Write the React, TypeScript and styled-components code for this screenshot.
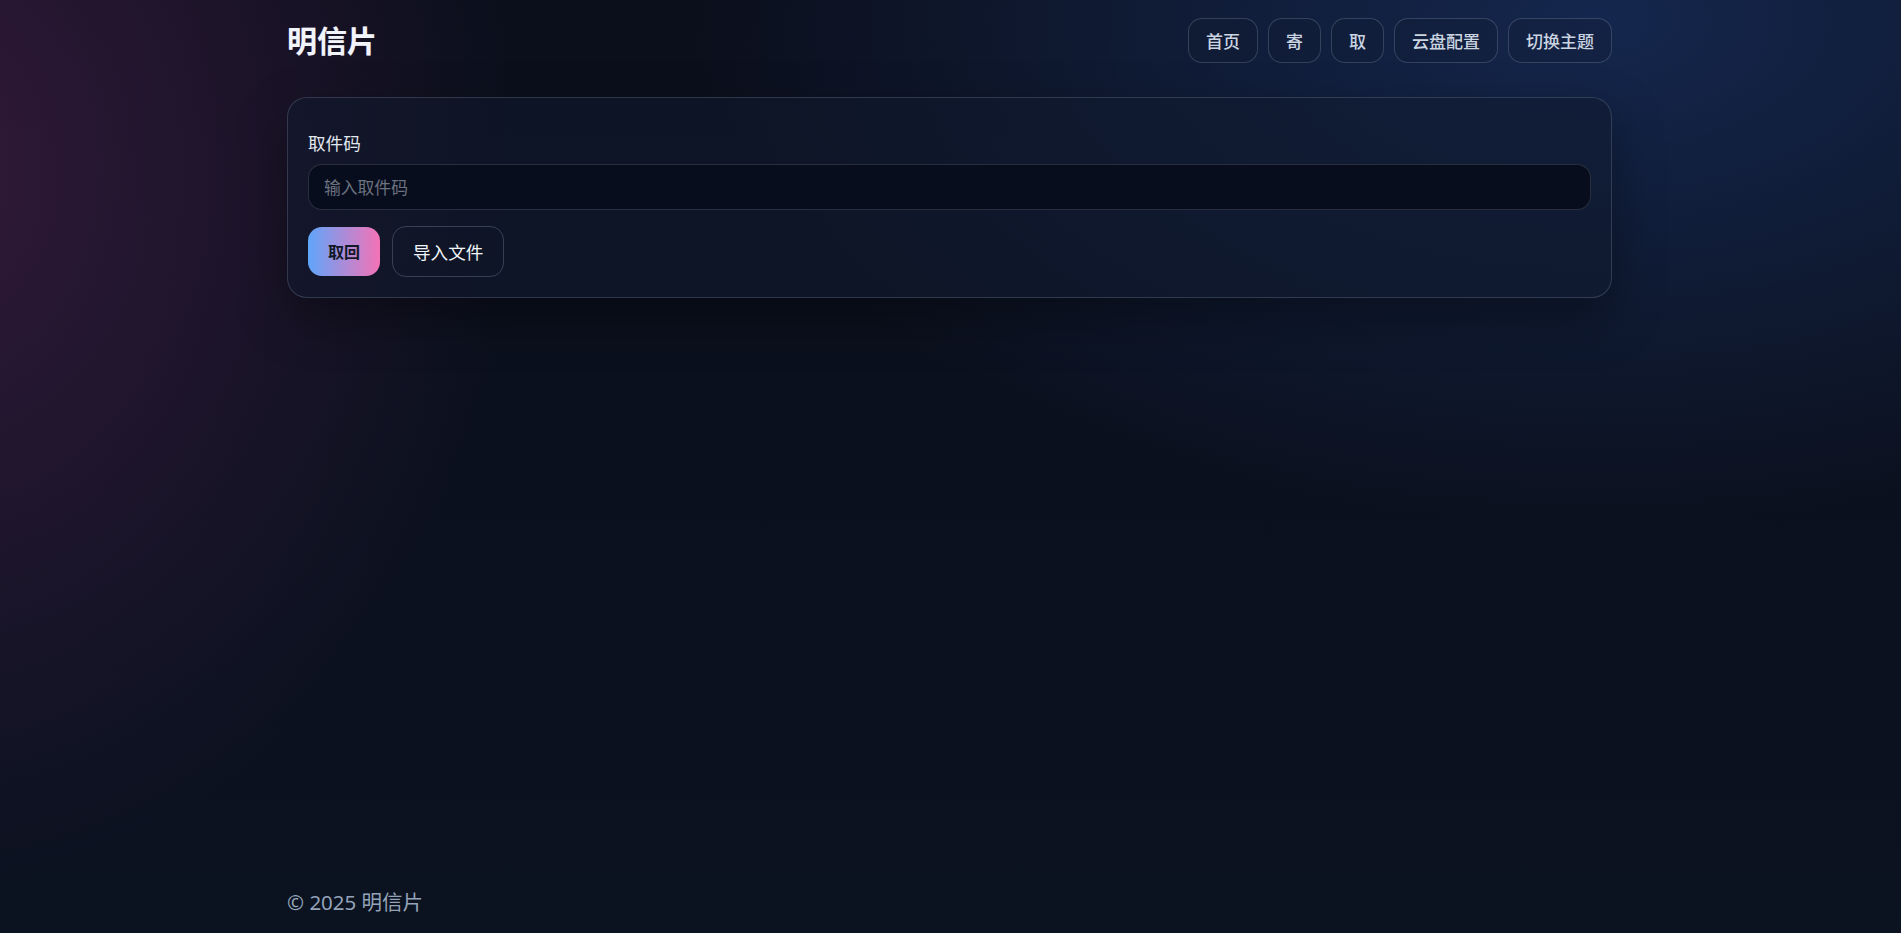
import React from "react";
import styled, { createGlobalStyle } from "styled-components";

const GlobalStyle = createGlobalStyle`
  html, body {
    margin: 0;
    padding: 0;
  }
  body {
    background-color: #0b111f;
    font-family: "Noto Sans", "Noto Sans CJK SC", sans-serif;
    color: #e2e8f0;
  }
  * { box-sizing: border-box; }
`;

const Page = styled.div`
  min-height: 100vh;
  display: flex;
  flex-direction: column;
  background:
    radial-gradient(1250px 700px at 84% 2%, rgba(28, 58, 118, 0.55), rgba(28, 58, 118, 0) 72%),
    radial-gradient(820px 1000px at -4% 18%, rgba(92, 36, 88, 0.48), rgba(92, 36, 88, 0) 72%),
    linear-gradient(180deg, #0b0f1c 0%, #0b1220 100%);
`;

const Container = styled.div`
  width: 1325px;
  margin: 0 0 0 287px;
  flex: 1;
  display: flex;
  flex-direction: column;
`;

const Header = styled.header`
  display: flex;
  align-items: center;
  justify-content: space-between;
  padding-top: 18px;
`;

const Title = styled.h1`
  margin: 0 0 4px;
  font-family: "Noto Sans CJK SC", sans-serif;
  font-size: 30px;
  font-weight: 700;
  line-height: 40px;
  color: #f1f5f9;
  text-shadow: -0.6px 0 rgba(244, 114, 182, 0.35), 0.6px 0 rgba(96, 165, 250, 0.35);
`;

const Nav = styled.nav`
  display: flex;
  gap: 10px;
`;

const NavButton = styled.button`
  font-family: "Noto Sans CJK SC", sans-serif;
  font-size: 17px;
  font-weight: 500;
  line-height: 23px;
  padding: 10px 17px;
  border-radius: 14px;
  border: 1px solid rgba(148, 163, 184, 0.28);
  background: rgba(15, 23, 42, 0.25);
  color: #cbd5e1;
  cursor: pointer;
`;

const Card = styled.section`
  margin-top: 34px;
  padding: 32px 20px 20px;
  border-radius: 20px;
  border: 1px solid rgba(148, 163, 184, 0.25);
  background: rgba(17, 25, 45, 0.55);
  box-shadow: 0 20px 50px rgba(0, 0, 0, 0.35);
  display: flex;
  flex-direction: column;
`;

const Label = styled.label`
  font-family: "Noto Sans CJK SC", sans-serif;
  font-size: 17.6px;
  line-height: 26px;
  color: #e2e8f0;
`;

const Input = styled.input`
  margin-top: 8px;
  height: 46px;
  padding: 0 15px;
  border-radius: 14px;
  border: 1px solid rgba(148, 163, 184, 0.22);
  background: #080d1d;
  color: #e2e8f0;
  font-family: "Noto Sans CJK SC", sans-serif;
  font-size: 16.8px;
  outline: none;
  &::placeholder {
    color: #6b7280;
  }
`;

const Actions = styled.div`
  margin-top: 16px;
  display: flex;
  align-items: center;
  gap: 12px;
`;

const PrimaryButton = styled.button`
  font-family: "Noto Sans CJK SC", sans-serif;
  font-size: 16px;
  font-weight: 700;
  line-height: 25px;
  padding: 12px 20px;
  border: none;
  border-radius: 14px;
  background: linear-gradient(90deg, #60a5fa 0%, #f472b6 100%);
  color: #111827;
  cursor: pointer;
`;

const GhostButton = styled.button`
  font-family: "Noto Sans CJK SC", sans-serif;
  font-size: 17.6px;
  line-height: 27px;
  padding: 11px 20px;
  border-radius: 14px;
  border: 1px solid rgba(148, 163, 184, 0.3);
  background: transparent;
  color: #f1f5f9;
  cursor: pointer;
`;

const Footer = styled.footer`
  margin-top: auto;
  padding: 14px 0 17px;
  font-size: 20.5px;
  line-height: 28px;
  color: #94a3b8;
`;

export default function App() {
  return (
    <>
      <GlobalStyle />
      <Page>
        <Container>
          <Header>
            <Title>明信片</Title>
            <Nav>
              <NavButton>首页</NavButton>
              <NavButton>寄</NavButton>
              <NavButton>取</NavButton>
              <NavButton>云盘配置</NavButton>
              <NavButton>切换主题</NavButton>
            </Nav>
          </Header>
          <Card>
            <Label htmlFor="code">取件码</Label>
            <Input id="code" placeholder="输入取件码" />
            <Actions>
              <PrimaryButton>取回</PrimaryButton>
              <GhostButton>导入文件</GhostButton>
            </Actions>
          </Card>
          <Footer>© 2025 明信片</Footer>
        </Container>
      </Page>
    </>
  );
}
